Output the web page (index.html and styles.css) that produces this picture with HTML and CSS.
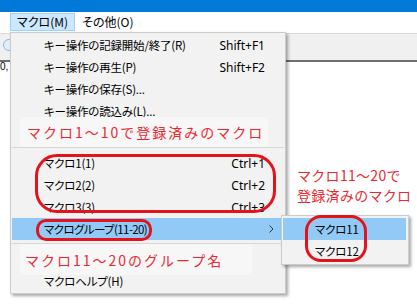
FILE: index.html
```html
<!DOCTYPE html>
<html lang="ja">
<head>
<meta charset="utf-8">
<link rel="stylesheet" href="styles.css">
</head>
<body>
<div class="screen">
  <div class="titlebar"></div>
  <div class="menubar">
    <span class="mb-item active">マクロ(M)</span>
    <span class="mb-item">その他(O)</span>
  </div>
  <div class="toolbar"><span class="tb-radio"></span></div>
  <div class="content"><span class="cell">0,</span></div>

  <div class="menu">
    <div class="row"><span class="label">キー操作の記録開始/終了(R)</span><span class="key">Shift+F1</span></div>
    <div class="row"><span class="label">キー操作の再生(P)</span><span class="key">Shift+F2</span></div>
    <div class="row"><span class="label">キー操作の保存(S)...</span></div>
    <div class="row"><span class="label">キー操作の読込み(L)...</span></div>
    <div class="row"></div>
    <div class="sep"></div>
    <div class="row"><span class="label">マクロ1(1)</span><span class="key">Ctrl+1</span></div>
    <div class="row"><span class="label">マクロ2(2)</span><span class="key">Ctrl+2</span></div>
    <div class="row"><span class="label">マクロ3(3)</span><span class="key">Ctrl+3</span></div>
    <div class="row hl sub"><span class="label tight">マクログループ(11-20)</span><svg class="arrow" width="5" height="8" viewBox="0 0 5 8"><path d="M0.5 0.5 L4 4 L0.5 7.5" fill="none" stroke="#333" stroke-width="1"/></svg></div>
    <div class="sep"></div>
    <div class="row"></div>
    <div class="row"><span class="label">マクロヘルプ(H)</span></div>
  </div>

  <div class="submenu">
    <div class="row hl"><span class="label">マクロ11</span></div>
    <div class="row"><span class="label">マクロ12</span></div>
  </div>

  <div class="note note-a">マクロ1～10で登録済みのマクロ</div>
  <div class="note note-b">マクロ11～20のグループ名</div>
  <div class="note-c">マクロ11～20で<br>登録済みのマクロ</div>

  <div class="ring ring-1"></div>
  <div class="ring ring-2"></div>
  <div class="ring ring-3"></div>
</div>
</body>
</html>
```

FILE: styles.css
```css
* { box-sizing: border-box; }
html, body { margin: 0; padding: 0; background: #ffffff; }
body {
  font-family: "Noto Sans CJK JP", "Noto Sans", sans-serif;
  font-size: 12px;
  color: #000;
}
.screen {
  position: relative;
  width: 417px;
  height: 306px;
  overflow: hidden;
  background: #fff;
}
.titlebar { height: 12px; background: #0078d7; }
.menubar {
  height: 21px;
  display: flex;
  align-items: flex-start;
  padding-left: 10px;
  background: #fff;
}
.mb-item {
  margin-top: 1px;
  height: 18px;
  line-height: 16px;
  padding: 0 6px;
  border: 1px solid transparent;
  font-feature-settings: "palt";
}
.mb-item.active { background: #cce8ff; border-color: #99d1ff; }
.toolbar {
  height: 29px;
  background: #f0f0f0;
  border-top: 1px solid #dadada;
  border-bottom: 2px solid #6e6e6e;
  padding: 5px 0 0 3px;
}
.tb-radio {
  display: block;
  width: 12px;
  height: 12px;
  border-radius: 50%;
  border: 1px solid #8fb8de;
  background: #e2eefa;
}
.content { padding: 0; }
.cell {
  font-family: "Liberation Sans", sans-serif;
  font-size: 10px;
  line-height: 9px;
  display: block;
}

.menu {
  position: absolute;
  left: 10px;
  top: 32px;
  width: 276px;
  background: #f2f2f2;
  border: 1px solid #cccccc;
  padding: 1px;
  box-shadow: 2px 2px 3px rgba(0, 0, 0, 0.35);
}
.row {
  height: 22px;
  display: flex;
  align-items: center;
  padding: 0 19px 0 32px;
  white-space: nowrap;
}
.row .label {
  flex: 1;
  font-size: 11.5px;
  letter-spacing: -0.2px;
  font-feature-settings: "palt";
}
.row .label.tight { letter-spacing: -0.6px; }
.row .key { font-family: "Noto Sans", sans-serif; font-size: 12px; }
.row.hl { background: #91c9f7; }
.row.sub { padding-right: 10px; }
.arrow { display: block; }
.sep {
  height: 8px;
  padding-top: 3px;
}
.sep::before {
  content: "";
  display: block;
  height: 1px;
  background: #d7d7d7;
}

.submenu {
  position: absolute;
  left: 281px;
  top: 215px;
  width: 128px;
  background: #f2f2f2;
  border: 1px solid #cccccc;
  padding: 2px 2px 2px 1px;
  box-shadow: 2px 2px 3px rgba(0, 0, 0, 0.35);
}
.submenu .row { padding-right: 4px; }

.note {
  position: absolute;
  left: 20px;
  background: #f7f7f7;
  color: #ea2a32;
  font-size: 14px;
  display: flex;
  align-items: center;
  white-space: nowrap;
}
.note-a {
  top: 117px;
  width: 248px;
  height: 30px;
  padding-left: 7px;
  letter-spacing: 2px;
}
.note-b {
  top: 244px;
  width: 232px;
  height: 31px;
  padding-left: 5px;
  letter-spacing: 2px;
}
.note-c {
  position: absolute;
  left: 297px;
  top: 165px;
  color: #ea2a32;
  font-size: 14px;
  line-height: 20px;
  letter-spacing: 0.3px;
  white-space: nowrap;
}

.ring {
  position: absolute;
  border: 3px solid #e3131c;
}
.ring-1 { left: 35px; top: 154px; width: 241px; height: 59px; border-radius: 22px; }
.ring-2 { left: 36px; top: 219px; width: 116px; height: 22px; border-radius: 10px; }
.ring-3 { left: 305px; top: 215px; width: 62px; height: 47px; border-radius: 16px; }
```
